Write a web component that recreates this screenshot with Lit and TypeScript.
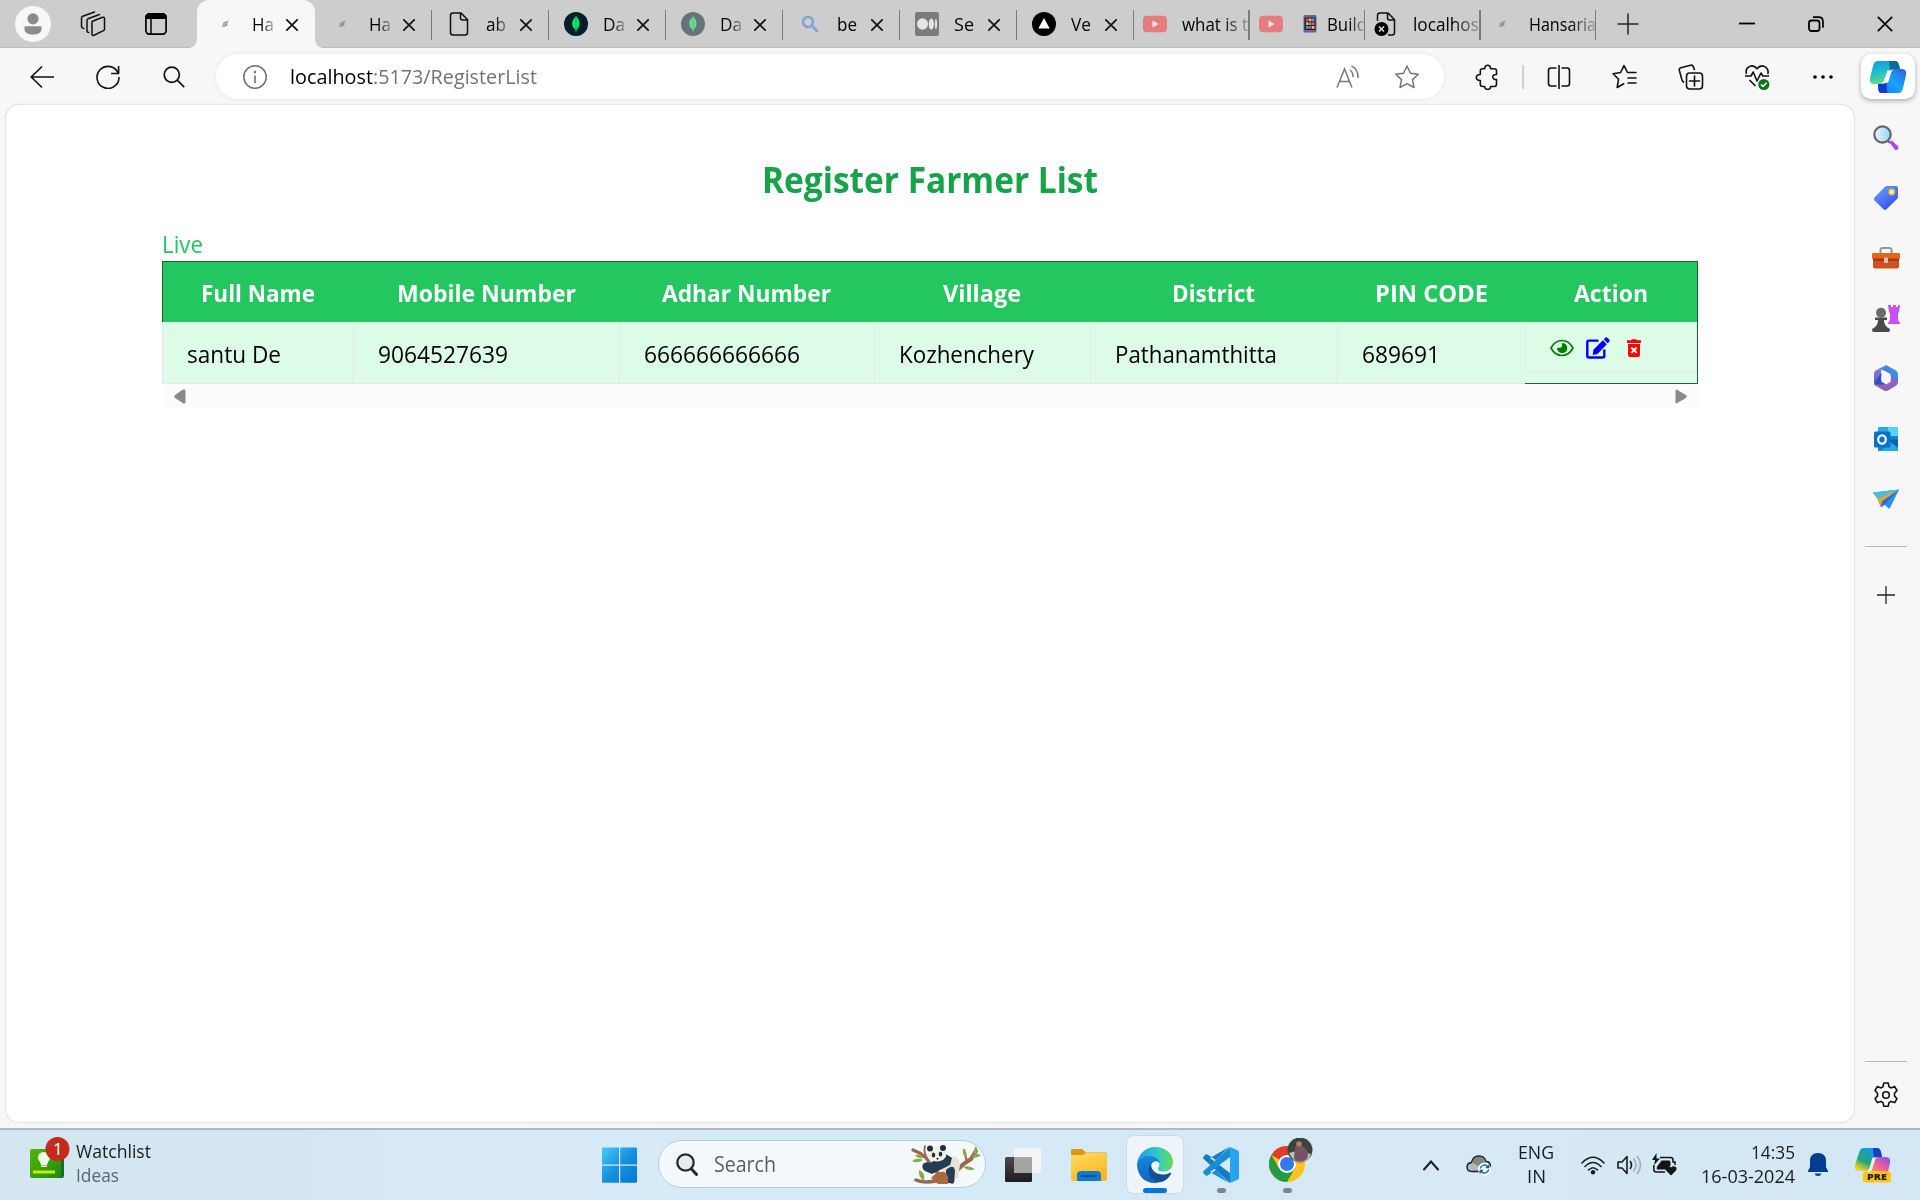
import { LitElement, html, css, svg, nothing } from "lit";
import { customElement, property } from "lit/decorators.js";
import { classMap } from "lit/directives/class-map.js";

const icons: Record<string, [number, number, unknown]> = {
  avatar: [36, 36, svg`<circle cx="18" cy="18" r="18" fill="#f7f7f7"/><circle cx="18" cy="12.8" r="5.6" fill="#8c8c8c"/><path d="M9.5 20.2h17v2.8c0 3.6-3.5 5.6-8.500 5.600s-8.500-2-8.500-5.600z" fill="#8c8c8c"/>`],
  workspaces: [26, 26, svg`<g fill="none" stroke="#111" stroke-width="1.500" stroke-linejoin="round" stroke-linecap="round"><path d="M12.500 10.200 22.500 6.300q2-.6 2 1.400v10.500q0 1-1 1.500l-9.500 4.500q-2 .8-2-1.200V11.400q0-.9.5-1.200z"/><path d="M8.800 21.500q-1.800 0-1.800-2V9.500q0-1.200 1-1.700L19.500 3.500"/><path d="M3.800 17.500Q1.500 17 1.500 15V7q0-1.300 1.200-1.800L14.500 1"/></g>`],
  tabactions: [22, 22, svg`<rect x=".9" y=".9" width="20.200" height="20.200" rx="3.500" fill="none" stroke="#000" stroke-width="1.700"/><path d="M.5 6V4q0-3.500 3.500-3.500h14q3.500 0 3.500 3.500v2z"/><path d="M6 6v15" stroke="#000" stroke-width="1.500"/>`],
  close: [12, 12, svg`<path d="M.8.8l10.400 10.400M11.200.8.8 11.200" stroke="#111" stroke-width="1.700" stroke-linecap="round"/>`],
  smudge: [8, 8, svg`<path d="M1.500 7 3 3 6.500 1.500 5 4.500 6.500 5.500M2 4h4M3 6.800l3-4" stroke="#858585" stroke-width="1.200" fill="none" opacity=".8"/>`],
  page: [24, 24, svg`<path d="M3.500 3.500q0-2.500 2.500-2.500h8l6.500 6.500V20.500q0 2.500-2.500 2.500H6q-2.500 0-2.500-2.500zM13.500 1v5q0 2 2 2h5" fill="none" stroke="#111" stroke-width="1.500"/>`],
  pageerror: [24, 24, svg`<path d="M3.500 9V3.500q0-2.500 2.500-2.500h8l6.500 6.500V20.500q0 2.500-2.500 2.500h-4M13.500 1v5q0 2 2 2h5" fill="none" stroke="#111" stroke-width="1.500"/><circle cx="7.500" cy="17" r="7"/><path d="M5 14.500l5 5m0-5-5 5" stroke="#ddd" stroke-width="1.500"/>`],
  mongo: [24, 24, svg`<circle cx="12" cy="12" r="12" fill="#001e2b"/><path d="M12 4c3.500 3.500 4.400 7.500 2.500 11.500-.7 1.300-1.500 2-2 2.500l-.2 2h-.6l-.2-2c-1.500-1.300-3.500-3.500-3.300-7C8.300 8 10.500 6.500 12 4z" fill="#00ed64"/><path d="M12 5v13" stroke="#008c4a" stroke-width=".7"/>`],
  bluesearch: [18, 18, svg`<circle cx="7" cy="7" r="5" fill="none" stroke="#7fa6d0" stroke-width="2.600"/><path d="M11 11l5 5" stroke="#7fa6d0" stroke-width="2.800" stroke-linecap="round"/>`],
  medium: [24, 24, svg`<rect width="24" height="24" rx="2" fill="#7b7b7b"/><ellipse cx="7.500" cy="12" rx="5.500" ry="5.800" fill="#e4e4e4"/><ellipse cx="16.300" cy="12" rx="2.600" ry="5.500" fill="#e4e4e4"/><ellipse cx="21" cy="12" rx="1.100" ry="5" fill="#e4e4e4"/>`],
  vercel: [24, 24, svg`<circle cx="12" cy="12" r="12"/><path d="M12 6l5.700 10.500H6.300z" fill="#fff"/>`],
  youtube: [24, 24, svg`<rect y="3.800" width="24" height="16.500" rx="4" fill="#e57c7f"/><path d="M9.500 8.500v7l6-3.500z" fill="#f2e3e3"/>`],
  phone: [14, 18, svg`<rect width="13" height="17.500" rx="1.500" x=".5" fill="#66639f"/><rect x="1.500" y="2.500" width="11" height="12.500" fill="#321a3c"/><path d="M3 3.500h2.500v2.700H3zM9 7.300h2.500V10H9zM6 11h2.500v2.700H6z" fill="#f05a35"/><path d="M6 3.500h2.500v2.700H6zM3 7.300h2.500V10H3zM9 11h2.500v2.700H9z" fill="#ffc12e"/><path d="M9 3.500h2.500v2.700H9zM6 7.300h2.500V10H6zM3 11h2.500v2.700H3z" fill="#40a8f5"/>`],
  newtab: [22, 22, svg`<path d="M11 .5v21M.5 11h21" stroke="#222" stroke-width="1.500"/>`],
  minimize: [16, 16, svg`<path d="M0 7.500h16" stroke="#000" stroke-width="1.800"/>`],
  restore: [16, 16, svg`<rect x="1" y="4.500" width="10.500" height="10.500" rx="2.500" fill="none" stroke="#000" stroke-width="1.800"/><path d="M5 1.200h5.500q4.500 0 4.500 4.500v6" fill="none" stroke="#000" stroke-width="1.700"/>`],
  winclose: [16, 16, svg`<path d="M.8.8l14.400 14.400M15.200.8.8 15.200" stroke="#000" stroke-width="1.700"/>`],
  back: [24, 24, svg`<path d="M24 12H1.500M12 1.500 1.200 12 12 22.500" fill="none" stroke="#111" stroke-width="1.600"/>`],
  refresh: [24, 24, svg`<path d="M22.300 8.500A11 11 0 1 0 23 12M22.600 1v7.500h-7.500" fill="none" stroke="#111" stroke-width="1.600"/>`],
  search: [22, 22, svg`<circle cx="8.800" cy="8.800" r="7.600" fill="none" stroke="#111" stroke-width="1.700"/><path d="M14.200 14.200l7 7" stroke="#111" stroke-width="1.700"/>`],
  info: [24, 24, svg`<circle cx="12" cy="12" r="11.200" fill="none" stroke="#6e6e6e" stroke-width="1.500"/><path d="M12 10.500v7.500" stroke="#6e6e6e" stroke-width="1.600"/><circle cx="12" cy="7" r="1.200" fill="#6e6e6e"/>`],
  read: [24, 24, svg`<g fill="none" stroke="#767676" stroke-width="1.500"><path d="M1 22.500 8.500 4 16 22.500M3.500 16.500h10"/><path d="M14 5q3.200 2.500 3 7M15.500.8Q22.500 4.500 22 13"/></g>`],
  star: [26, 26, svg`<path d="M13 2l3.400 7.200 7.900 1-5.800 5.400 1.500 7.900-7-3.900-7 3.900 1.500-7.900L1.700 10.200l7.900-1z" fill="none" stroke="#767676" stroke-width="1.500" stroke-linejoin="round"/>`],
  puzzle: [24, 26, svg`<path d="M7.500 4.800h2.200C9.500 0 15.800 0 15.600 4.800h3.700q2.200 0 2.200 2.200v3.500c-5-.3-5 5.300 0 5v4.800q0 2.200-2.200 2.200h-3.700c.2 3.800-6.100 3.800-5.900 0H7.500q-2.200 0-2.200-2.200v-3.800c-5.300.3-5.300-6.300 0-6V7q0-2.200 2.200-2.200z" fill="none" stroke="#111" stroke-width="1.600" stroke-linejoin="round"/>`],
  split: [24, 26, svg`<path d="M9.500 4H4Q1.500 4 1.500 6.500v13Q1.500 22 4 22h5.500M14.500 4H20q2.500 0 2.500 2.500v13Q22.500 22 20 22h-5.500M12 1v24" fill="none" stroke="#111" stroke-width="1.600"/>`],
  favorites: [26, 26, svg`<path d="M15.500 8.500 12 1.500l-3.400 7-7.500 1.200 5.500 5.500L5.200 23.500l6.500-3.700M12 1.500l3.500 7h8.500M16 14h8M16 19h8" fill="none" stroke="#111" stroke-width="1.600" stroke-linejoin="round" stroke-linecap="round"/>`],
  collections: [26, 26, svg`<g fill="none" stroke="#111" stroke-width="1.600"><rect x="8.500" y="9" width="16" height="16" rx="3.200"/><path d="M16.500 12v10M11.500 17h10" stroke-linecap="round"/><path d="M6 18.500q-1.500-1-2-2.600L1.300 6.300q-.5-2 1.500-2.600l9.800-2.500q2-.5 2.700 1.400L16.500 6"/></g>`],
  heart: [26, 26, svg`<g fill="none" stroke="#111" stroke-width="1.600" stroke-linejoin="round"><path d="M2.500 10C.5 3 8.500-1 13 4.800 17.500-1 25.500 3 23.800 10"/><path d="M1 12h6l2.200-4 3.800 9 4-8 1.800 3H25M5.500 16l6 6"/></g><circle cx="19.800" cy="20.500" r="5.600" fill="#12751c"/><path d="M17 20.500l2 2 3.600-3.800" fill="none" stroke="#fff" stroke-width="1.400"/>`],
  dots: [20, 6, svg`<circle cx="2" cy="3" r="1.800"/><circle cx="10" cy="3" r="1.800"/><circle cx="18" cy="3" r="1.800"/>`],
  copilot: [38, 34, svg`<defs><linearGradient id="ca" x1="0" y1="0" x2=".3" y2="1"><stop stop-color="#1598e6"/><stop offset=".5" stop-color="#20bccb"/><stop offset="1" stop-color="#62dc90"/></linearGradient><linearGradient id="cb" x1="1" y1="0" x2="0" y2="1"><stop stop-color="#2b60d8"/><stop offset=".5" stop-color="#18a5ff"/><stop offset="1" stop-color="#1a6af0"/></linearGradient></defs><path d="M9 1h17q3 0 4 4l1 4h-7q-3 0-4 4l-2 7q-1 4-5 4H5q-5 0-4-6L4 6q1-5 5-5z" fill="url(#ca)"/><path d="M20 1h6q3 0 4 4l1 4h-7q-2 0-3 2z" fill="#0b6b98"/><path d="M29 33H12q-2 0-2.500-3L9 24h4q4 0 5-4l3-8q1-3 4-3h8q5 0 4 6l-3 13q-1 5-5 5z" fill="url(#cb)"/><path d="M18 33h-6q-2 0-2.500-3L9 24h4q3 0 4.500-2z" fill="#1936c9"/><path d="M18.500 10.500h5.500q-1.500.7-2 2.500l-2.200 7.500q-.9 2.800-3.800 2.800h-4q2.500-.8 3.200-3.300z" fill="#fff"/>`],
  eye: [24, 18, svg`<path d="M1 9Q5 1.500 12 1.500T23 9q-4 7.500-11 7.500T1 9z" fill="none" stroke="green" stroke-width="1.700"/><circle cx="12" cy="9" r="5" fill="green"/><path d="M12 3.800A5 5 0 0 0 7 9h3.500q2 0 1.500-2.500z" fill="#dcfce7"/><path d="M8 8.500q2.500.8 3.800-.7T12 4.500A4.700 4.700 0 1 1 8 8.500z" fill="green"/>`],
  edit: [24, 22, svg`<path d="M12.500 3.600H2.800Q1.300 3.600 1.300 5v14q0 1.500 1.500 1.500h14q1.500 0 1.500-1.500v-6.500" fill="none" stroke="#00f" stroke-width="2.400"/><path d="M16.800 3.300l4 4L11.500 17l-4.800.9.7-5.200zM17.700 2.400l1.500-1.600q1-1 2.200 0l1.800 1.800q1 1 0 2.100l-1.500 1.500z" fill="#00f"/>`],
  trash: [14, 18, svg`<path d="M0 1.300h4l1-1.100h4l1 1.100h4V4H0zM1 5h12v11q0 2-2 2H3q-2 0-2-2z" fill="red"/><path d="M4.300 8.500l5.400 5.400m0-5.400-5.400 5.400" stroke="#fff" stroke-width="1.900"/>`],
  arrowleft: [12, 15, svg`<path d="M10.500.5q1 0 1 1v12q0 1-1 1h-1L1 9q-1.300-1.500 0-3L8.500.8z" fill="#8a8a8a"/>`],
  arrowright: [12, 15, svg`<path d="M1.500.5q-1 0-1 1v12q0 1 1 1L11 9q1.300-1.500 0-3z" fill="#8a8a8a"/>`],
  lens: [26, 26, svg`<defs><linearGradient id="lg"><stop stop-color="#e8f6ff"/><stop offset="1" stop-color="#9bd3f8"/></linearGradient></defs><path d="M16.500 17.500l2-2.200 6.500 6q1.200 2-1 3.500-1 .8-2.200-.3z" fill="#bd3df0"/><path d="M14 15l3 3" stroke="#666" stroke-width="2"/><circle cx="9.500" cy="9.500" r="8.200" fill="url(#lg)" stroke="#626664" stroke-width="2.200"/>`],
  tag: [26, 26, svg`<defs><linearGradient id="tg" x2=".7" y2="1"><stop stop-color="#68a8ff"/><stop offset="1" stop-color="#354df5"/></linearGradient></defs><path d="M13.500 1H23q2 0 2 2v9q0 1-1 2L13.500 24.200q-1.500 1.300-3 0L1.500 15.500q-1-1.500 0-3L12 1.700q.7-.7 1.500-.7z" fill="url(#tg)"/><circle cx="18.700" cy="7" r="2.600" fill="#fff" stroke="#f7c512" stroke-width="1.600"/>`],
  toolbox: [28, 22, svg`<path d="M8.500 6V3q0-2 2-2h7q2 0 2 2v3" fill="none" stroke="#969696" stroke-width="2"/><rect x="1" y="9" width="26" height="12.500" rx="2" fill="#d2501e"/><rect y="6" width="28" height="6" rx="1" fill="#e9641b"/><path d="M1 11.500h26v2.500H1z" fill="#a93710"/><rect x="12" y="10.500" width="4" height="5.500" rx="1" fill="#c9c9c9"/>`],
  chess: [28, 28, svg`<path d="M16 1h3v2h2V1h3v2h2V1h2l-1 7q-1 1-1 2v6l2 3v1H16v-1l2-3v-6q0-1-1-2z" fill="#c850f5"/><circle cx="9" cy="8.700" r="5" fill="#6b6b6b"/><path d="M3 13.500h12v2.500h-3q0 5 3.500 7.500 2.500.5 2.500 2.500t-2 2H2q-2 0-2-2t2.500-2.500Q6 21 6 16H3z" fill="#4a4a4a"/>`],
  m365: [26, 28, svg`<defs><linearGradient id="m1" x1="1" x2="0" y2="1"><stop stop-color="#38b4ea"/><stop offset="1" stop-color="#4b4fd0"/></linearGradient><linearGradient id="m2" y1="0" y2="1" x2="0"><stop stop-color="#9f7de4"/><stop offset="1" stop-color="#3866c9"/></linearGradient></defs><path d="M13 1 23 6.500q2 1.200 2 3.500v8L17.500 14V10L13 7.500 8 5z" fill="url(#m1)"/><path d="M13 1Q8 4 8 9v9l-5 4q-2-1-2-3.500V9.500q0-2 2-3.200z" fill="url(#m2)"/><path d="M3 22l6-4 4 2.500 4.500-2.500v-6l7.500 6q0 2.500-2 3.800l-8 4.700q-2 1-4 0z" fill="#8d63bd"/><path d="M1 18.500q2 3 7 2l5 0-4.500-2.500V9z" fill="#3453b9"/><circle cx="13" cy="14" r="4.900" fill="#f7f7f7"/>`],
  outlook: [26, 26, svg`<path d="M6 1h17q2 0 2 2v13H5V2z" fill="#27a8ec"/><path d="M15 1h10v10H15z" fill="#55d3f8"/><path d="M5 10h20v15H6q-1 0-1-1z" fill="#1681cf"/><path d="M25 12 7 25h17q1 0 1-1z" fill="#24a9e9"/><path d="M15 14l10 8v-9z" fill="#1062a8"/><rect y="5.500" width="16.500" height="16" rx="1.500" x="1" fill="#0872c8"/><ellipse cx="9" cy="13.500" rx="3.800" ry="4.200" fill="none" stroke="#fff" stroke-width="2.200"/>`],
  plane: [26, 20, svg`<path d="M0 3.500 26 .5 17 19q-1 1-2 0l-4-4-3.500 3L5 10.500z" fill="#2f8ee8"/><path d="M0 3.500 26 .5 5 10.500z" fill="#4abceb"/><path d="M26 .5 5 9.500l2.500 8.500 2-6z" fill="#efa41a"/><path d="M9.500 12 26 .5 12 15.500l-4 3z" fill="#2770dc"/>`],
  plus: [18, 18, svg`<path d="M9 0v18M0 9h18" stroke="#222" stroke-width="1.300"/>`],
  gear: [26, 26, svg`<path d="M10.800 1h4.400l.8 3.700 2 1.200 3.700-1.300 2.300 3.900-2.500 2.800v2.600l2.500 2.800-2.300 3.900-3.700-1.200-2 1.200-.8 3.700h-4.400l-.8-3.700-2-1.200-3.700 1.200L2 16.700l2.500-2.800v-2.600L2 8.500l2.300-3.900L8 5.900l2-1.200z" fill="none" stroke="#111" stroke-width="1.600" stroke-linejoin="round"/><circle cx="13" cy="13" r="3.300" fill="none" stroke="#111" stroke-width="1.600"/>`],
  watch: [44, 44, svg`<defs><linearGradient id="wg" x2="1" y2="1"><stop stop-color="#52b60d"/><stop offset="1" stop-color="#218a0d"/></linearGradient></defs><path d="M4 13h30v26q0 2-2 2H5z" fill="#1d6b29"/><rect y="12" width="31" height="29" rx="2" fill="url(#wg)"/><path d="M14 15q6 0 6 6 0 2-2 4l-1 3h-6l-1-3q-2-2-2-4 0-6 6-6zM11 28.500h6V30h-6z" fill="#eefbe6"/><rect x="3" y="33.500" width="22" height="3" fill="#c5f000"/><circle cx="27.500" cy="12" r="12" fill="#c42b1c"/>`],
  windows: [36, 36, svg`<defs><linearGradient id="wn" x2="1" y2="1"><stop stop-color="#45cbfb"/><stop offset=".5" stop-color="#1791df"/><stop offset="1" stop-color="#0277d7"/></linearGradient></defs><path d="M0 1.500Q0 .5 1 .5h16v17H0zM18.200.5H34q1 0 1 1v16H18.200zM0 18.700h17v17H1q-1 0-1-1zM18.200 18.700H35v16q0 1-1 1H18.200z" fill="url(#wn)"/>`],
  tasksearch: [22, 23, svg`<circle cx="9.500" cy="9.500" r="8.200" fill="#e8eaec" stroke="#282828" stroke-width="2.300"/><path d="M15.500 16l5 5.500" stroke="#282828" stroke-width="3" stroke-linecap="round"/>`],
  panda: [70, 40, svg`<g fill="none" stroke="#9b6650" stroke-linecap="round"><path d="M2 6q14 5 18 16l10 10" stroke-width="3.200"/><path d="M14 2q-2 6 3 14" stroke-width="1.800"/><path d="M41 38q2-13 19-23l5-8" stroke-width="4"/><path d="M56 18 53 6" stroke-width="2.200"/><path d="M5 36q10 5 36-3" stroke-width="3.500"/></g><g fill="#88a947"><path d="M1 17q5-4 11-1-6 4-11 1zM4 11q6-1 9 3-6 1-9-3zM52 5q5 2 3 9-4-3-3-9zM60 13q5-5 10-2-4 4-10 2zM65 2q3 5-1 9-3-4 1-9zM52 23q6-2 12 2-6 3-12-2zM8 26q7 3 5 11-6-4-5-11z"/></g><path d="M33 16q15-9 16 5l-2 13q-9 6-17-2z" fill="#e4e3d4"/><path d="M12 20q3-3 7-1l16-9 6 4-2 7-18 9-7-3q-4-3-2-7zM35 26q8-7 9 1l-1 12h-8z" fill="#263c52"/><ellipse cx="26" cy="10" rx="9.500" ry="7.600" fill="#f2f0e5"/><circle cx="19" cy="4.500" r="3" fill="#1f303d"/><circle cx="32" cy="4" r="3" fill="#1f303d"/><ellipse cx="22.500" cy="11" rx="1.800" ry="2.500" fill="#21313e"/><ellipse cx="29.500" cy="10" rx="1.800" ry="2.500" fill="#21313e"/><path d="M25 14h3l-1.500 2z" fill="#222"/><path d="M20 34q8-9 15-5l2 4v7H27z" fill="#a96a3f"/>`],
  taskview: [36, 36, svg`<defs><linearGradient id="tv" y1="0" y2="1" x2="0"><stop stop-color="#4a4a4a"/><stop offset="1" stop-color="#1c1c1c"/></linearGradient></defs><rect y="10" width="27" height="25" rx="1.500" fill="url(#tv)"/><rect x="9" y="1" width="27" height="25" rx="1.500" fill="#f4f4f4"/><path d="M9 10h18v16H9z" fill="#a5a5a5"/>`],
  folder: [36, 36, svg`<defs><linearGradient id="fo" y1="0" y2="1" x2=".5"><stop stop-color="#ffdc68"/><stop offset="1" stop-color="#fab81b"/></linearGradient></defs><path d="M0 3.500Q0 2 1.500 2H11l4 3.500h20q1 0 1 1.500v5H0z" fill="#d99a0b"/><path d="M0 8h12l3-2h19q2 0 2 2v24q0 2-2 2H2q-2 0-2-2z" fill="url(#fo)"/><path d="M6 34v-6q0-4 4-4h16q4 0 4 4v6z" fill="#117ad0"/><path d="M11 29h14" stroke="#07529b" stroke-width="2" stroke-linecap="round"/>`],
  edge: [36, 36, svg`<defs><linearGradient id="eg"><stop stop-color="#189be0"/><stop offset=".5" stop-color="#2cc5d4"/><stop offset="1" stop-color="#63dd55"/></linearGradient><linearGradient id="eb" y1="0" y2="1" x2="0"><stop stop-color="#1686dc"/><stop offset="1" stop-color="#0d65bd"/></linearGradient></defs><path d="M0 17C1 7 9 0 18 0c11 0 18 7 18 15 0 6-4 9.500-9.500 9.500-5 0-6.500-2-5-4 3-5-2-9-8-9C7 11.500 2 14 0 17z" fill="url(#eg)"/><path d="M0 17c2-5 7-8 12-8 6 0 10 3 11 7-5-4-9 0-9 4 0 7 6 15 13 13-3 2-6 3-9 3C7 36 0 28 0 17z" fill="url(#eb)"/><path d="M14 17c-6 7 0 18 10 18 4-1 8-4 10-8 .5-1-.3-1.500-1.500-1C24 30 14 26 14 17z" fill="#124d96"/>`],
  vscode: [36, 36, svg`<path d="M26 0 13 13 4.500 7.500Q3 7 2 8L.7 9.500q-1.200 1.200 0 2.500L27 36V26L7 11z" fill="#147cc0"/><path d="M26 36 13 23l-8.500 5.500Q3 29 2 28L.7 26.500q-1.200-1.200 0-2.500L27 0v10L7 25z" fill="#168fd6"/><path d="M27 0l8 3.500q1 .5 1 2v25q0 1.500-1 2L27 36z" fill="#27a3f0"/>`],
  chrome: [46, 44, svg`<circle cx="18" cy="26" r="18" fill="#fcc31c"/><path d="M18 26 2.400 17A18 18 0 0 1 33.600 17H18z" fill="#e33b2e"/><path d="M2.400 17A18 18 0 0 0 18 44l7.800-13.500L18 26 10.200 30.500z" fill="#269846"/><circle cx="18" cy="26" r="9" fill="#fff"/><circle cx="18" cy="26" r="7" fill="#3279ec"/><circle cx="31" cy="12" r="12.500" fill="#39443e"/><path d="M20 15q9-4 22 1-2 8-11 8-7 0-11-9z" fill="#b9bfb3"/><path d="M26 9q5-3 9 0 6 5 3 12-8 5-13 0z" fill="#775164"/><circle cx="30" cy="6" r="2.800" fill="#b27c6c"/>`],
  chevron: [16, 12, svg`<path d="M1 10.500 8 2.500l7 8" fill="none" stroke="#1d1d1d" stroke-width="2" stroke-linecap="round"/>`],
  cloud: [26, 22, svg`<path d="M6 17.500q-5 0-5-4.500 0-4 4.500-4.500Q7 2 13 2q5.500 0 7 5.500 4.500 0 4.500 5 0 5-5 5z" fill="#b8b8b8" stroke="#1b1b1b" stroke-width="1.400"/><path d="M6 8.500Q8 3 13 3q5 0 7 5.500L12 12z" fill="#858585"/><circle cx="18.500" cy="15" r="6.500" fill="#fff"/><path d="M14.300 14.500a4.300 4.300 0 0 1 7.500-2l1 1m0-3v3h-3M22.700 15.500a4.300 4.300 0 0 1-7.500 2l-1-1m0 3v-3h3" fill="none" stroke="#0d65ba" stroke-width="1.400"/>`],
  wifi: [24, 19, svg`<g fill="none" stroke="#1a1a1a" stroke-width="1.600" stroke-linecap="round"><path d="M1 7Q12-4.500 23 7M4 10.500q8-8 16 0M7.500 14q4.500-4.500 9 0"/></g><circle cx="12" cy="16.300" r="2.200" fill="#1a1a1a"/>`],
  volume: [25, 20, svg`<path d="M1 7h4l5-5.500v17L5 13H1z" fill="none" stroke="#1a1a1a" stroke-width="1.600" stroke-linejoin="round"/><path d="M13 6q3 4 0 8" fill="none" stroke="#1a1a1a" stroke-width="1.600"/><path d="M16.500 3.500q5 6.500 0 13M20 1q7 9 0 18" fill="none" stroke="#9dabb3" stroke-width="1.500"/>`],
  battery: [26, 24, svg`<path d="M8 4.500h10.500q2.500 0 2.500 2.500v2h2v3M1.800 12v4.500q0 2.500 2.500 2.500H13" fill="none" stroke="#151515" stroke-width="1.500"/><path d="M9.500 7.500h7.500q1.500 0 1.500 1.500v3.500L14 16.500H4.800V14z" fill="#151515"/><path d="M4.500 0 0 7h3l-.8 5L8 5.500H4.500z" fill="#151515"/><path d="M19 22.500l-5-5q-1.500-3 1-4 2.500-.8 4 1 1.500-1.800 4-1 2.500 1 1 4z" fill="#151515"/>`],
  bell: [20, 24, svg`<path d="M10 0q8 0 8 8v6l2 4v1H0v-1l2-4V8q0-8 8-8zM6.500 20.500h7Q12.500 23 10 23t-3.500-2.500z" fill="#003f91"/>`],
  pre: [36, 36, svg`<defs><linearGradient id="pa" x1=".6" x2="0" y2="1"><stop stop-color="#1598ea"/><stop offset=".55" stop-color="#23a778"/><stop offset=".85" stop-color="#f3cc25"/></linearGradient><linearGradient id="pb" x1="1" x2="0" y2="1"><stop stop-color="#7a55f2"/><stop offset=".5" stop-color="#e55c9b"/><stop offset="1" stop-color="#ff9d45"/></linearGradient></defs><path d="M9 1h13q3 0 4 4l1 5h-5q-3 0-4 4l-2 6q-1 4-5 4H4q-5 0-4-6L4 6q1-5 5-5z" fill="url(#pa)"/><path d="M18 1h4q3 0 4 4l1 5h-5q-2 0-3 2z" fill="#153fcb"/><path d="M14 24l4-11q1-3 4-3h9q5 0 4 6l-2 9z" fill="url(#pb)"/><path d="M17.500 10.500h4.500q-1.300.6-1.800 2L16.500 24H12q1.800-.8 2.400-3z" fill="#e8f1f8"/><rect x="8" y="24.500" width="28" height="11" rx="2.500" fill="#fec411"/>`],
};

const icon = (name: string) => {
  const [w, h, body] = icons[name];
  return html`<svg width=${w} height=${h} viewBox="0 0 ${w} ${h}" aria-hidden="true">${body}</svg>`;
};

/** A single line of text condensed or widened to a given width. */
@customElement("fit-text")
class FitText extends LitElement {
  static styles = css`
    :host { display: block; white-space: nowrap; flex: none; }
    .inner { display: inline-block; transform-origin: 0 50%; vertical-align: top; }
  `;
  @property({ type: Number }) width = 0;

  render() {
    return html`<span class="inner"><slot></slot></span>`;
  }

  firstUpdated() {
    const inner = this.renderRoot.querySelector(".inner") as HTMLElement;
    const natural = inner.getBoundingClientRect().width;
    if (natural > 0 && this.width > 0) {
      inner.style.transform = `scaleX(${this.width / natural})`;
      this.style.width = `${this.width}px`;
    }
  }
}

const fit = (text: string, width: number) => html`<fit-text width=${width}>${text}</fit-text>`;

interface Tab { icon: string; title: string; w: number; active?: boolean; dim?: boolean; narrow?: boolean; emoji?: string; fade?: boolean }

const tabs: Tab[] = [
  { icon: "smudge", title: "Ha", w: 22, active: true, fade: true },
  { icon: "smudge", title: "Ha", w: 22, fade: true },
  { icon: "page", title: "ab", w: 20, fade: true },
  { icon: "mongo", title: "Da", w: 22, fade: true },
  { icon: "mongo", title: "Da", w: 22, dim: true, fade: true },
  { icon: "bluesearch", title: "be", w: 20 },
  { icon: "medium", title: "Se", w: 20 },
  { icon: "vercel", title: "Ve", w: 20 },
  { icon: "youtube", title: "what is t", w: 66, narrow: true, fade: true },
  { icon: "youtube", title: "Build", w: 40, narrow: true, emoji: "phone", fade: true },
  { icon: "pageerror", title: "localhost", w: 72, narrow: true, fade: true },
  { icon: "smudge", title: "Hansaria", w: 67, narrow: true, fade: true },
];

const columns: [string, number][] = [
  ["Full Name", 114], ["Mobile Number", 179], ["Adhar Number", 169], ["Village", 78],
  ["District", 83], ["PIN CODE", 113], ["Action", 74],
];
const farmer: [string, number][] = [
  ["santu De", 94], ["9064527639", 130], ["666666666666", 156], ["Kozhenchery", 135],
  ["Pathanamthitta", 162], ["689691", 78],
];

@customElement("app-root")
class AppRoot extends LitElement {
  static styles = css`
    :host { display: block; width: 1920px; height: 1200px; overflow: hidden; font-family: "Open Sans", "Noto Sans", sans-serif; color: #000; }
    * { box-sizing: border-box; }
    svg { display: block; flex: none; }
    .screen { display: flex; flex-direction: column; height: 1200px; background: #f7f7f7; }
    .slot { display: flex; align-items: center; justify-content: center; flex: none; }

    .strip { display: flex; height: 48px; background: #cdcdcd; border-bottom: 1px solid #bdbdbd; flex: none; }
    .lead { display: flex; align-items: center; width: 197px; padding-left: 15px; }
    .lead .ws { margin-left: 29px; }
    .lead .ta { margin-left: 39px; }
    .tab { position: relative; display: flex; align-items: center; width: 117px; height: 48px; flex: none; font-size: 18px; padding-left: 16px; }
    .tab.narrow { width: 115.500px; padding-left: 10px; }
    .tab::after { content: ""; position: absolute; right: -1px; top: 10px; width: 1.500px; height: 30px; background: #7b7b7b; }
    .tab.active::after { display: none; }
    .tab.active { background: #f7f7f7; border-radius: 12px 12px 0 0; width: 118px; margin-right: -1px; z-index: 1; }
    .flare { position: absolute; bottom: 0; width: 8px; height: 8px; }
    .flare.l { left: -8px; background: radial-gradient(circle at 0 0, transparent 7.500px, #f7f7f7 8px); }
    .flare.r { right: -8px; background: radial-gradient(circle at 100% 0, transparent 7.500px, #f7f7f7 8px); }
    .fav { width: 24px; height: 24px; }
    .dim { opacity: .5; }
    .title { width: 22px; margin-left: 15px; margin-top: -1px; overflow: hidden; flex: none; }
    .fade { -webkit-mask-image: linear-gradient(90deg, #000 40%, rgba(0, 0, 0, .25)); }
    .narrow .title { width: 67px; }
    .narrow .fade { -webkit-mask-image: linear-gradient(90deg, #000 60%, rgba(0, 0, 0, .2)); }
    .emoji { margin-left: 20px; }
    .narrow .emoji + .title { width: 37px; margin-left: 10px; }
    .x { margin-left: 12px; margin-top: 2px; }
    .newtab { width: 66px; }
    .winbtns { margin-left: auto; display: flex; }
    .winbtns .slot { width: 69px; padding-right: 1px; }

    .toolbar { display: flex; align-items: center; height: 57px; padding: 0 5px 0 9px; flex: none; }
    .toolbar .slot { width: 66px; }
    .omni { display: flex; align-items: center; width: 1228px; height: 45px; margin: 0 10px 0 9px; padding: 0 24px 0 27px; border-radius: 23px; background: #fff; box-shadow: 0 0 5px rgba(0, 0, 0, .07); font-size: 20px; }
    .url { display: flex; margin-left: 22.500px; color: #737373; }
    .url .host { color: #000; }
    .omni .read { margin-left: auto; margin-right: 34px; }
    .vsep { width: 2px; height: 24px; margin: 0 2px; background: #d0d0d0; }
    .cop { display: flex; align-items: center; justify-content: center; width: 54px; height: 45px; margin-left: auto; border-radius: 10px; background: #fff; box-shadow: 0 2px 5px rgba(0, 0, 0, .3); }

    .middle { display: flex; height: 1023px; flex: none; }
    .page { width: 1848px; height: 1017px; margin-left: 6px; background: #fff; border-radius: 13px; box-shadow: 0 0 2px rgba(0, 0, 0, .28); padding: 48px 156px 0; flex: none; }
    .heading { display: flex; justify-content: center; margin: 0; font-size: 36px; line-height: 54px; font-weight: 700; color: #16a34a; }
    .live { margin-top: 19px; line-height: 35px; font-size: 24px; color: #22c55e; }
    .table { display: grid; grid-template-columns: 191px 266px 255px 216px 247px 188px 173px; width: 1536px; font-size: 24px; }
    .th { display: flex; align-items: center; justify-content: center; height: 61px; background: #24c65f; border-top: 1px solid #166534; color: #fff; font-weight: 700; }
    .th:first-child { border-left: 1px solid #166534; }
    .th.last { border-right: 1px solid #166534; }
    .td { display: flex; align-items: center; height: 62px; padding-left: 24px; background: #dcfce7; border: 1px solid #e5e7eb; border-right: 0; }
    .actions { height: 62px; background: #dcfce7; border-right: 1px solid #166534; border-bottom: 1px solid #166534; }
    .actbox { display: flex; align-items: center; height: 51px; border: 1px solid #e5e7eb; padding-left: 24px; }
    .edit { margin-left: 12px; }
    .trash { margin-left: 17px; }
    .scroll { display: flex; align-items: center; justify-content: space-between; width: 1536px; height: 24px; padding: 0 11px 0 12px; background: #fcfcfc; }

    .side { display: flex; flex-direction: column; align-items: center; width: 64px; padding-top: 2.500px; }
    .side .slot { height: 60.200px; }
    .rule { width: 42px; height: 1px; background: #b5b5b5; flex: none; }
    .r1 { margin-top: 17px; }
    .plus { margin-top: 39.500px; }
    .r2 { margin-top: auto; }
    .gear { margin: 20.500px 0 20px; }

    .taskbar { display: flex; height: 72px; border-top: 2px solid #adb9c4; background: linear-gradient(90deg, #d5e6f0, #d2e6f1 14%, #d9eaf7 25%, #d4ebf7 42%, #d6e9f5 75%, #d3e8f4); font-size: 18px; color: #1b1b1b; flex: none; }
    .widget { position: relative; display: flex; width: 602px; padding: 7px 0 0 30px; }
    .badge { position: absolute; left: 53px; top: 7px; color: #fff; line-height: 24px; font-size: 17px; }
    .lines { display: flex; flex-direction: column; line-height: 24px; margin-top: 2px; }
    .sub { color: #5a6670; }
    .widget .lines { margin-left: 2px; }
    .start { padding-top: 16.500px; width: 56px; }
    .find { position: relative; display: flex; align-items: center; width: 328px; height: 48px; margin: 10px 4px 0 0; padding: 0 5px 0 17px; border: 1.500px solid #b8ced9; border-radius: 24px; background: #f3f9fd; font-size: 21px; color: #5a5d60; }
    .find .lbl { margin-left: 16px; margin-top: -1px; }
    .find .art { margin-left: auto; margin-right: -1px; }
    .app { position: relative; width: 66px; height: 70px; }
    .app.on::before { content: ""; position: absolute; left: 5px; top: 6px; width: 56px; height: 57px; border-radius: 6px; background: #edf5fb; box-shadow: 0 0 2px #9fbccc; }
    .app svg { position: relative; top: -.5px; }
    .app::after { content: ""; position: absolute; top: 58px; left: 28.500px; width: 9px; height: 5px; border-radius: 3px; background: #7d868d; }
    .app.idle::after { display: none; }
    .app.on::after { left: 21px; width: 24px; background: #0078d4; }
    .app.chrome svg { margin: -9px -10px 0 0; }
    .tray { margin-left: auto; display: flex; align-items: center; width: 514px; height: 70px; padding-left: 17px; }
    .tray .lines { margin-top: 0; position: relative; top: -1px; }
    .lang { align-items: center; margin-left: 26px; }
    .clock { align-items: flex-end; margin-left: 23px; }
    .wifi { margin-left: 27px; }
    .vol { margin-left: 12px; }
    .bat { margin-left: 10px; }
    .bell { margin-left: 13px; }
    .cld { margin-left: 27px; }
    .pre { position: relative; margin-left: 27px; }
    .pretxt { position: absolute; left: 12px; top: 24px; font-size: 9px; line-height: 12px; font-weight: 800; color: #222; }
  `;

  private tab(t: Tab) {
    return html`<div class=${classMap({ tab: true, active: !!t.active, narrow: !!t.narrow })}>
      ${t.active ? html`<i class="flare l"></i><i class="flare r"></i>` : nothing}
      <div class=${classMap({ slot: true, fav: true, dim: !!t.dim })}>${icon(t.icon)}</div>
      ${t.emoji ? html`<div class="emoji">${icon(t.emoji)}</div>` : nothing}
      <div class=${classMap({ title: true, fade: !!t.fade })}>${fit(t.title, t.w)}</div>
      ${t.narrow ? nothing : html`<div class="x">${icon("close")}</div>`}
    </div>`;
  }

  render() {
    return html`<div class="screen">
      <div class="strip">
        <div class="lead">${icon("avatar")}<div class="ws">${icon("workspaces")}</div><div class="ta">${icon("tabactions")}</div></div>
        ${tabs.map((t) => this.tab(t))}
        <div class="slot newtab">${icon("newtab")}</div>
        <div class="winbtns">${["minimize", "restore", "winclose"].map((n) => html`<div class="slot">${icon(n)}</div>`)}</div>
      </div>
      <div class="toolbar">
        ${["back", "refresh", "search"].map((n) => html`<div class="slot">${icon(n)}</div>`)}
        <div class="omni">${icon("info")}
          <div class="url"><span class="host">${fit("localhost", 83)}</span>${fit(":5173/RegisterList", 164)}</div>
          <div class="read">${icon("read")}</div>${icon("star")}
        </div>
        <div class="slot">${icon("puzzle")}</div><div class="vsep"></div>
        ${["split", "favorites", "collections", "heart", "dots"].map((n) => html`<div class="slot">${icon(n)}</div>`)}
        <div class="cop">${icon("copilot")}</div>
      </div>
      <div class="middle">
        <main class="page">
          <h1 class="heading">${fit("Register Farmer List", 336)}</h1>
          <div class="live">${fit("Live", 41)}</div>
          <div class="table">
            ${columns.map(([name, w], i) => html`<div class=${classMap({ th: true, last: i === columns.length - 1 })}>${fit(name, w)}</div>`)}
            ${farmer.map(([value, w]) => html`<div class="td">${fit(value, w)}</div>`)}
            <div class="actions"><div class="actbox">${icon("eye")}<div class="edit">${icon("edit")}</div><div class="trash">${icon("trash")}</div></div></div>
          </div>
          <div class="scroll">${icon("arrowleft")}${icon("arrowright")}</div>
        </main>
        <aside class="side">
          ${["lens", "tag", "toolbox", "chess", "m365", "outlook", "plane"].map((n) => html`<div class="slot">${icon(n)}</div>`)}
          <div class="rule r1"></div><div class="plus">${icon("plus")}</div>
          <div class="rule r2"></div><div class="gear">${icon("gear")}</div>
        </aside>
      </div>
      <div class="taskbar">
        <div class="widget">${icon("watch")}<span class="badge">1</span>
          <div class="lines">${fit("Watchlist", 75)}<div class="sub">${fit("Ideas", 43)}</div></div>
        </div>
        <div class="start">${icon("windows")}</div>
        <div class="find">${icon("tasksearch")}<div class="lbl">${fit("Search", 62)}</div><div class="art">${icon("panda")}</div></div>
        <div class="slot app idle">${icon("taskview")}</div>
        <div class="slot app idle">${icon("folder")}</div>
        <div class="slot app on">${icon("edge")}</div>
        <div class="slot app">${icon("vscode")}</div>
        <div class="slot app chrome">${icon("chrome")}</div>
        <div class="tray">
          ${icon("chevron")}<div class="cld">${icon("cloud")}</div>
          <div class="lines lang">${fit("ENG", 36)}${fit("IN", 19)}</div>
          <div class="wifi">${icon("wifi")}</div><div class="vol">${icon("volume")}</div><div class="bat">${icon("battery")}</div>
          <div class="lines clock">${fit("14:35", 44)}${fit("16-03-2024", 94)}</div>
          <div class="bell">${icon("bell")}</div>
          <div class="pre">${icon("pre")}<span class="pretxt">${fit("PRE", 20)}</span></div>
        </div>
      </div>
    </div>`;
  }
}
